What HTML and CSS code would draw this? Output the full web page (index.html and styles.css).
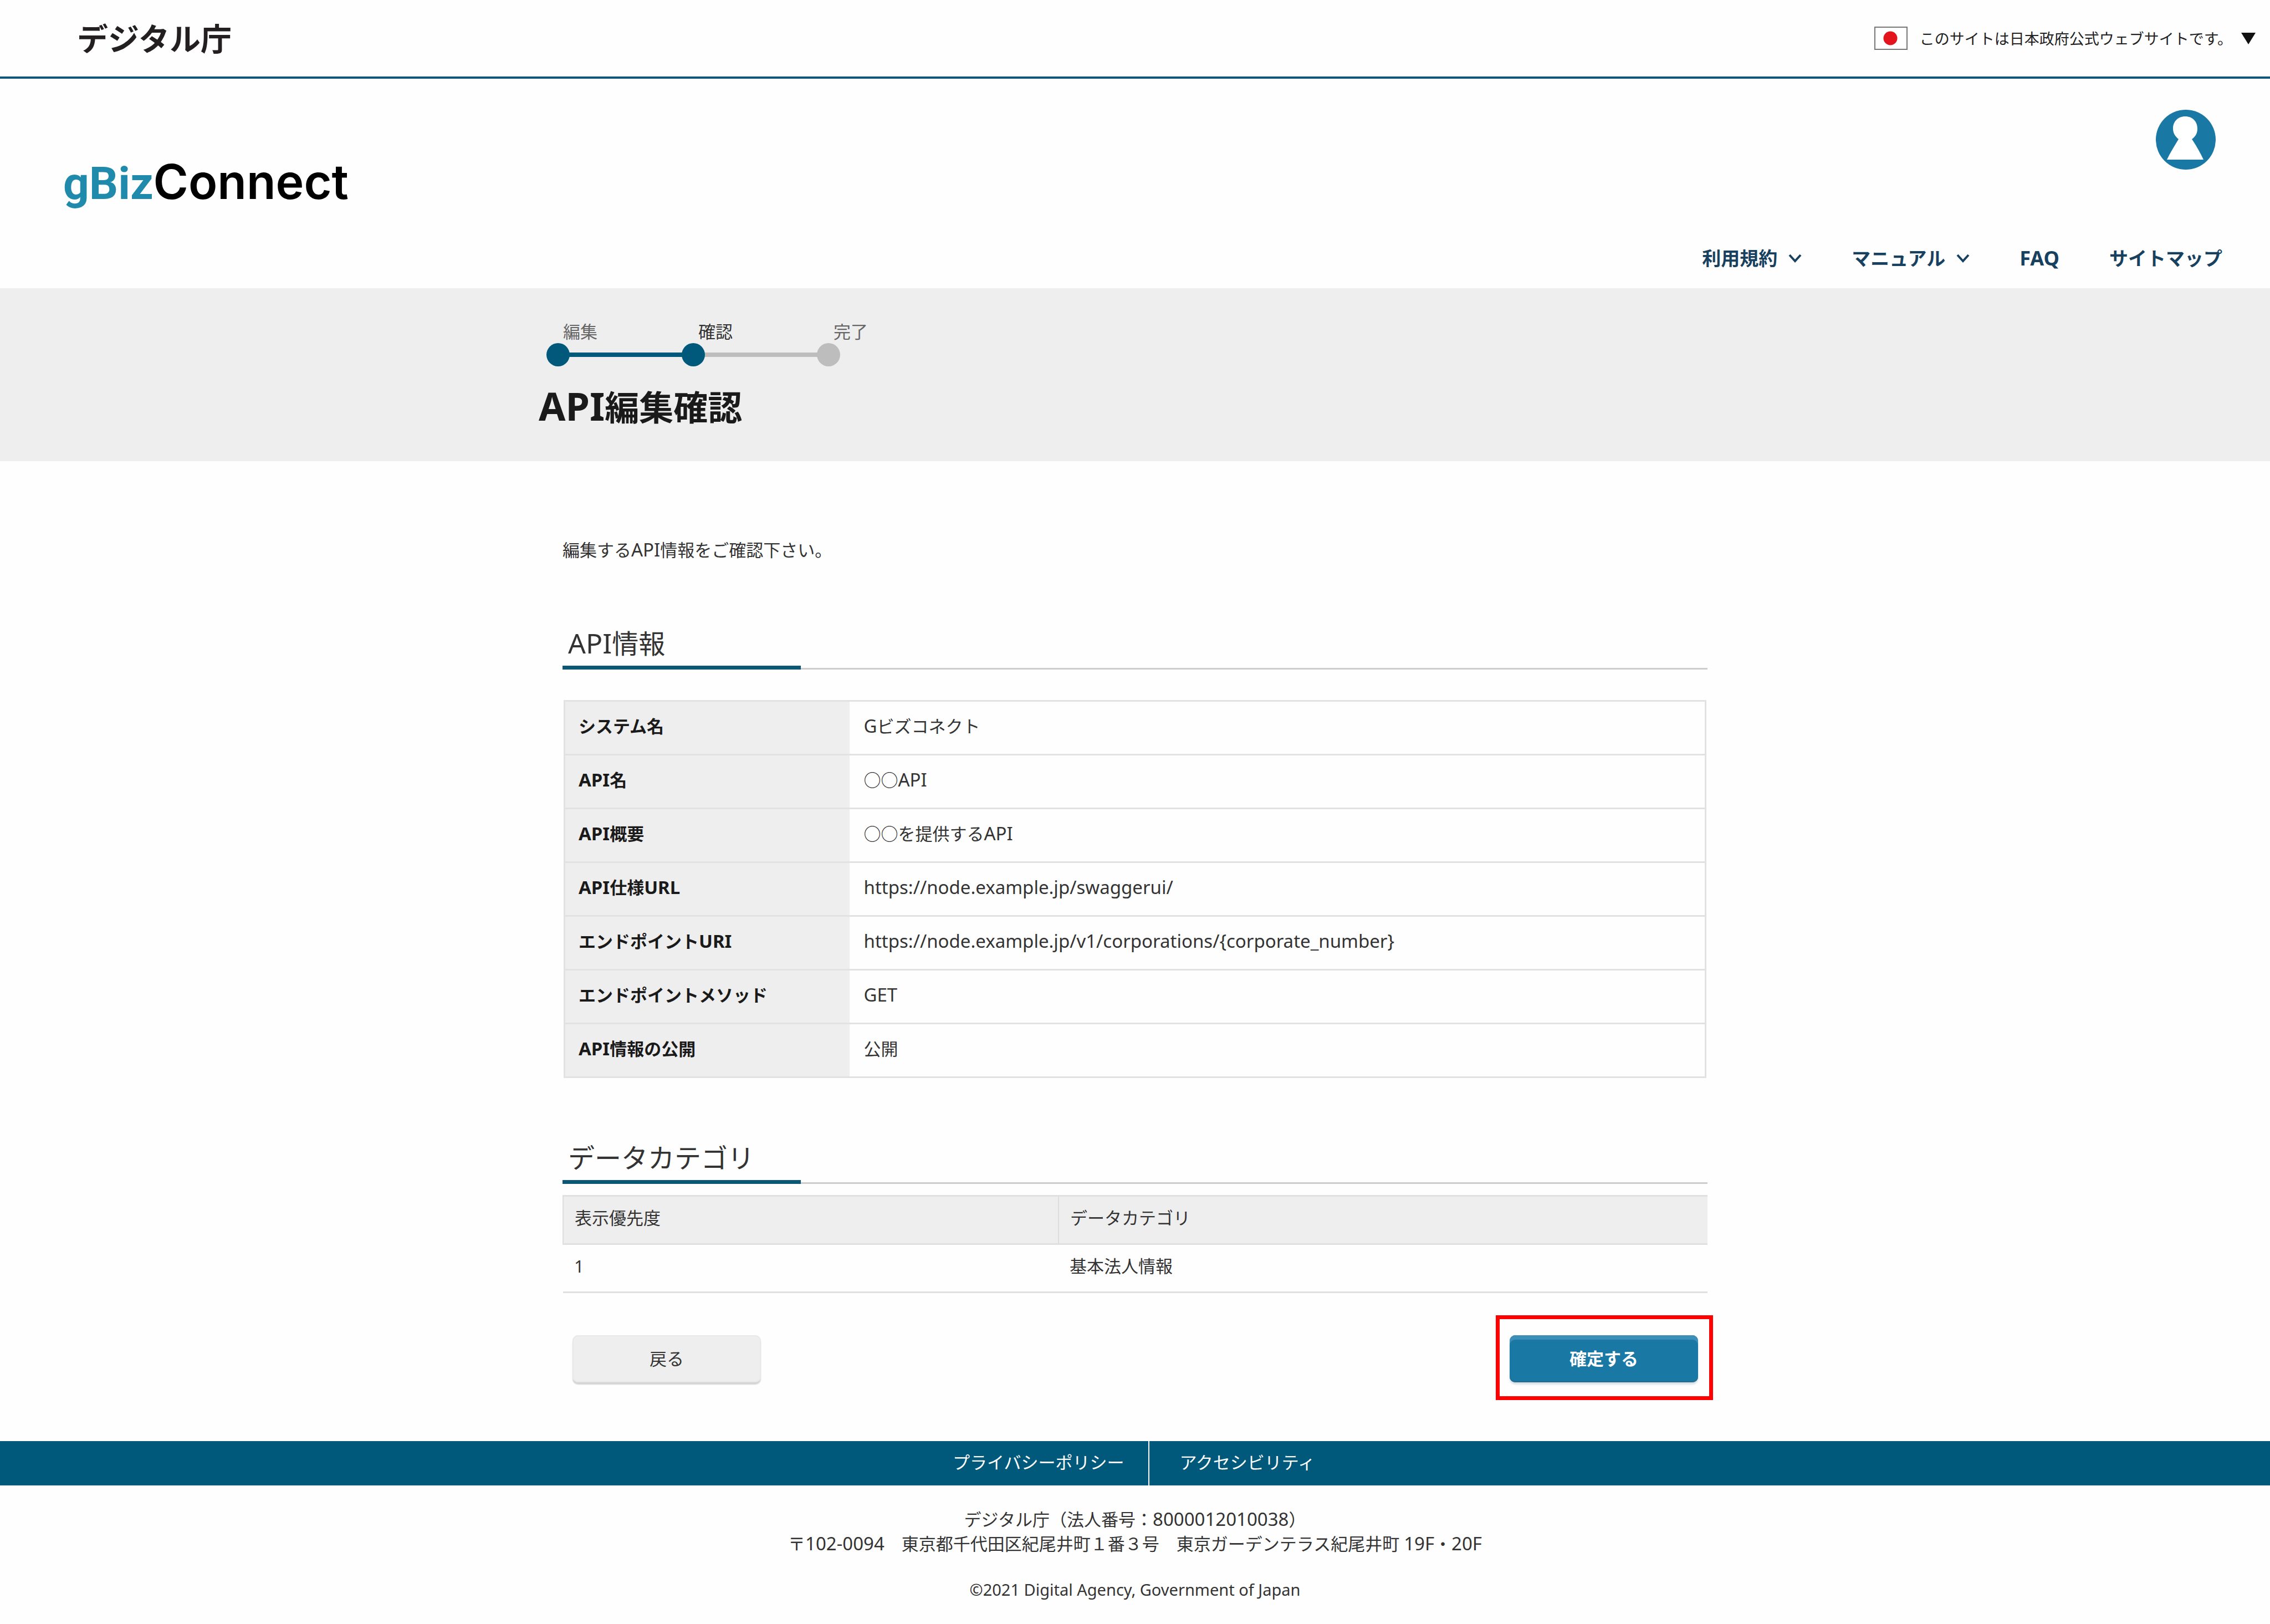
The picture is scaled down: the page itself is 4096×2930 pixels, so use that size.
FILE: index.html
```html
<!DOCTYPE html>
<html lang="ja">
<head>
<meta charset="utf-8">
<title>API編集確認 | gBizConnect</title>
<link rel="stylesheet" href="styles.css">
</head>
<body>
<div class="gov-bar">
  <p class="gov-name">デジタル庁</p>
  <div class="gov-note">
    <svg class="flag" viewBox="0 0 60 42" aria-hidden="true"><rect x="1" y="1" width="58" height="40" fill="#fff" stroke="#777" stroke-width="2"/><circle cx="29" cy="21" r="12.500" fill="#e3141b"/></svg>
    <span>このサイトは日本政府公式ウェブサイトです。</span>
    <svg class="triangle" viewBox="0 0 26 21" aria-hidden="true"><path d="M0 0H26L13 21Z" fill="#111"/></svg>
  </div>
</div>
<header class="site-header">
  <a class="logo" href="#"><span class="logo-g">gBiz</span><span class="logo-c">Connect</span></a>
  <div class="header-side">
    <a class="account" href="#" aria-label="アカウント">
      <svg viewBox="0 0 108 108" aria-hidden="true"><circle cx="54" cy="54" r="54" fill="#1a78a5"/><path d="M53 12C66 12 75 21 75 34C75 43 71 49 65 53C73 65 80 77 86 90H20C26 77 34 65 41 53C36 49 31 43 31 34C31 21 40 12 53 12Z" fill="#fff"/></svg>
    </a>
    <nav class="main-nav">
      <a href="#">利用規約<svg class="chevron" viewBox="0 0 24 16" aria-hidden="true"><path d="M2 2L12 13L22 2"/></svg></a>
      <a href="#">マニュアル<svg class="chevron" viewBox="0 0 24 16" aria-hidden="true"><path d="M2 2L12 13L22 2"/></svg></a>
      <a href="#"><span class="latin">FAQ</span></a>
      <a href="#">サイトマップ</a>
    </nav>
  </div>
</header>
<div class="title-band">
  <div class="title-inner">
    <ol class="steps">
      <li class="step step-done"><span>編集</span></li>
      <li class="step step-current" aria-current="step"><span>確認</span></li>
      <li class="step"><span>完了</span></li>
    </ol>
    <h1><span class="latin">API</span>編集確認</h1>
  </div>
</div>
<main class="content">
  <p class="intro">編集する<span class="latin">API</span>情報をご確認下さい。</p>
  <section>
    <h2><span class="latin">API</span>情報</h2>
    <table class="info">
      <tr><th scope="row">システム名</th><td><span class="latin">G</span>ビズコネクト</td></tr>
      <tr><th scope="row"><span class="latin">API</span>名</th><td>○○<span class="latin">API</span></td></tr>
      <tr><th scope="row"><span class="latin">API</span>概要</th><td>○○を提供する<span class="latin">API</span></td></tr>
      <tr><th scope="row"><span class="latin">API</span>仕様<span class="latin">URL</span></th><td><span class="latin">https://node.example.jp/swaggerui/</span></td></tr>
      <tr><th scope="row">エンドポイント<span class="latin">URI</span></th><td><span class="latin">https://node.example.jp/v1/corporations/{corporate_number}</span></td></tr>
      <tr><th scope="row">エンドポイントメソッド</th><td><span class="latin">GET</span></td></tr>
      <tr><th scope="row"><span class="latin">API</span>情報の公開</th><td>公開</td></tr>
    </table>
  </section>
  <section class="category">
    <h2>データカテゴリ</h2>
    <table class="list">
      <thead><tr><th scope="col">表示優先度</th><th scope="col">データカテゴリ</th></tr></thead>
      <tbody><tr><td>1</td><td>基本法人情報</td></tr></tbody>
    </table>
  </section>
  <div class="actions">
    <button type="button" class="btn btn-back">戻る</button>
    <div class="highlight"><button type="button" class="btn btn-submit">確定する</button></div>
  </div>
</main>
<footer>
  <nav class="footer-nav">
    <a href="#">プライバシーポリシー</a>
    <a href="#">アクセシビリティ</a>
  </nav>
  <address>デジタル庁（法人番号：<span class="latin">8000012010038</span>）<br>〒<span class="latin">102-0094</span>　東京都千代田区紀尾井町１番３号　東京ガーデンテラス紀尾井町 <span class="latin">19F</span>・<span class="latin">20F</span></address>
  <p class="copyright">©2021 Digital Agency, Government of Japan</p>
</footer>
</body>
</html>
```
FILE: styles.css
```css
* { box-sizing: border-box; }
body {
  margin: 0;
  background: #fefefe;
  color: #333;
  font: 31px/44px "Noto Sans", "Noto Sans CJK JP", sans-serif;
}
p, h1, h2, ol { margin: 0; padding: 0; }
a { color: inherit; text-decoration: none; }
svg { display: block; }

/* Latin letters and digits are set slightly larger than the kana and kanji */
.latin { font-size: 33px; line-height: 1; }
.main-nav .latin { font-size: 36px; }
h1 .latin { font-size: 70px; }
h2 .latin { font-size: 50px; }

.gov-bar {
  display: flex;
  justify-content: space-between;
  align-items: center;
  height: 142px;
  padding: 0 26px 0 139px;
  border-bottom: 4px solid #0b5775;
}
.gov-name { color: #231f20; font-size: 56px; font-weight: 700; line-height: 80px; }
.gov-note { display: flex; align-items: center; gap: 22px; color: #222; font-size: 27px; }
.gov-note span { font-family: "Noto Sans CJK JP", sans-serif; }
.flag { width: 60px; height: 42px; }
.triangle { width: 26px; height: 21px; margin-left: -6px; }

.site-header {
  display: flex;
  justify-content: space-between;
  padding: 56px 86px 32px 114px;
}
.logo { margin-top: 70px; line-height: 120px; white-space: nowrap; }
.logo-g { color: #1f8aac; font-family: Roboto, sans-serif; font-size: 82px; font-weight: 700; }
.logo-c { color: #000; font-family: Inter, sans-serif; font-size: 86px; font-weight: 600; }
.header-side { display: flex; flex-direction: column; align-items: flex-end; justify-content: space-between; height: 290px; }
.account { width: 108px; margin-right: 12px; }
.main-nav { display: flex; gap: 90px; color: #17415f; font-size: 34px; font-weight: 700; line-height: 44px; }
.main-nav a { display: flex; align-items: center; gap: 20px; }
.chevron { width: 24px; height: 16px; fill: none; stroke: #17415f; stroke-width: 4; }

.title-band { background: #eee; padding: 63px 0 59px; }
.title-inner { max-width: 2152px; margin: 0 auto; }
.steps { display: flex; list-style: none; margin-left: 14px; }
.step { position: relative; width: 244px; height: 78px; padding-left: 30px; line-height: 30px; color: #666; }
.step span { display: block; }
.step::before {
  content: "";
  position: absolute;
  z-index: 1;
  left: 0;
  bottom: 0;
  width: 42px;
  height: 42px;
  border-radius: 50%;
  background: #bdbdbd;
}
.step:not(:last-child)::after {
  content: "";
  position: absolute;
  left: 21px;
  bottom: 17px;
  width: 100%;
  height: 8px;
  background: #bdbdbd;
}
.step-done::before, .step-current::before, .step-done::after { background: #00597a !important; }
.step-current { color: #333; }
h1 { margin-top: 36px; color: #1a1a1a; font-size: 62px; line-height: 76px; }

.content { max-width: 2066px; margin: 0 auto; padding: 138px 0 74px; }
.intro { margin-bottom: 107px; line-height: 44px; }
h2 {
  position: relative;
  padding: 0 10px 4px;
  border-bottom: 3px solid #ccc;
  color: #333;
  font-size: 48px;
  font-weight: 400;
  line-height: 80px;
}
h2::after { content: ""; position: absolute; left: 0; bottom: -3px; width: 430px; height: 7px; background: #0b5775; }
table { border-collapse: collapse; table-layout: fixed; }
th, td { text-align: left; font-weight: 400; }
.info { width: calc(100% - 4px); margin: 55px 2px 0; border: 3px solid #e2e2e2; }
.info tr { height: 97px; border-bottom: 3px solid #e2e2e2; }
.info th { width: 514px; padding: 0 24px 6px; background: #eee; color: #1a1a1a; font-weight: 700; }
.info td { padding: 0 26px 6px; }
.category { margin-top: 104px; }
.list { width: 100%; margin-top: 20px; }
.list tr { height: 87px; border-bottom: 3px solid #e0e0e0; }
.list th { background: #eee; border-top: 3px solid #e0e0e0; border-left: 2px solid #ddd; }
.list th, .list td { padding: 0 20px 8px; }
.list th:first-child { width: 894px; }
.actions { display: flex; justify-content: space-between; margin: 40px -10px 0 18px; }
.btn {
  width: 340px;
  height: 85px;
  padding: 0 0 2px;
  border: 0;
  border-radius: 10px;
  font: inherit;
}
.btn-back { margin-top: 36px; background: #eee; color: #333; box-shadow: inset 0 0 0 2px #e8e8e8, 0 4px 2px #d4d4d4; }
.highlight { padding: 29px 20px 25px 18px; border: 7px solid #f00; }
.btn-submit { display: block; background: #1a78a5; color: #fff; font-weight: 700; box-shadow: inset 0 8px 1px #3d8fb7, inset 0 -2px 1px #2a6b8a, 0 4px 3px #d8e2e8; }

.footer-nav { display: flex; justify-content: center; height: 80px; padding-right: 14px; background: #00597a; color: #fff; line-height: 76px; }
.footer-nav a { padding: 0 44px 0 54px; }
.footer-nav a + a { border-left: 2px solid #fff; }
address { margin-top: 39px; font-style: normal; text-align: center; }
.copyright { margin: 39px 0 40px; font-size: 29px; text-align: center; }
```
